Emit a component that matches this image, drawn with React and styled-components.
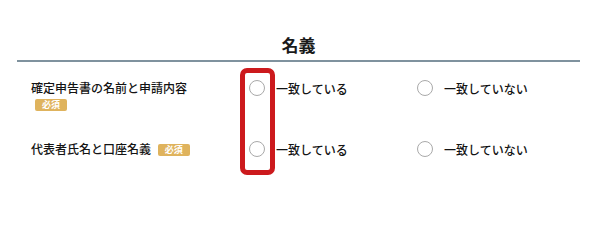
import React from 'react'
import styled, { createGlobalStyle } from 'styled-components'

const GlobalStyle = createGlobalStyle`
  body {
    margin: 0;
    background: #ffffff;
    font-family: "Noto Sans CJK JP", "Noto Sans", sans-serif;
    color: #1a1a1a;
  }
`

const Page = styled.div`
  position: relative;
  width: 600px;
  height: 212px;
  box-sizing: border-box;
  padding: 33px 20px 0 17px;
  background: #ffffff;
`

const Title = styled.h2`
  margin: 0;
  padding-bottom: 3px;
  text-align: center;
  font-size: 17px;
  line-height: 24px;
  font-weight: 700;
  color: #1a1a1a;
  border-bottom: 2px solid #7f929e;
`

const Row = styled.div`
  display: grid;
  grid-template-columns: 218px 168px 1fr;
  align-items: start;
  box-sizing: border-box;
  min-height: 61px;
  padding: 18px 0 0 14px;
`

const Label = styled.div`
  padding-right: 30px;
  font-size: 12px;
  line-height: 16px;
  font-weight: 500;
  color: #141414;
`

const Badge = styled.span`
  display: inline-block;
  margin-left: 4px;
  padding: 0 7px;
  background: #dfb35d;
  color: #ffffff;
  font-size: 9px;
  line-height: 12px;
  font-weight: 700;
  border-radius: 2px;
  vertical-align: 1px;
`

const Option = styled.label`
  display: flex;
  align-items: center;
  gap: 11px;
  height: 16px;
  font-size: 12px;
  font-weight: 500;
  color: #141414;
`

const Radio = styled.span`
  flex: none;
  width: 16px;
  height: 16px;
  box-sizing: border-box;
  border: 1px solid #a9a9a9;
  border-radius: 50%;
  background: #ffffff;
`

const Highlight = styled.div`
  position: absolute;
  left: 240px;
  top: 68px;
  width: 35px;
  height: 107px;
  box-sizing: border-box;
  border: 5px solid #cc1a1d;
  border-radius: 7px;
  pointer-events: none;
`

const items = [
  { label: '確定申告書の名前と申請内容' },
  { label: '代表者氏名と口座名義' },
]

const App = () => (
  <>
    <GlobalStyle />
    <Page>
      <Title>名義</Title>
      {items.map((item) => (
        <Row key={item.label}>
          <Label>
            {item.label} <Badge>必須</Badge>
          </Label>
          <Option>
            <Radio />
            一致している
          </Option>
          <Option>
            <Radio />
            一致していない
          </Option>
        </Row>
      ))}
      <Highlight />
    </Page>
  </>
)

export default App
